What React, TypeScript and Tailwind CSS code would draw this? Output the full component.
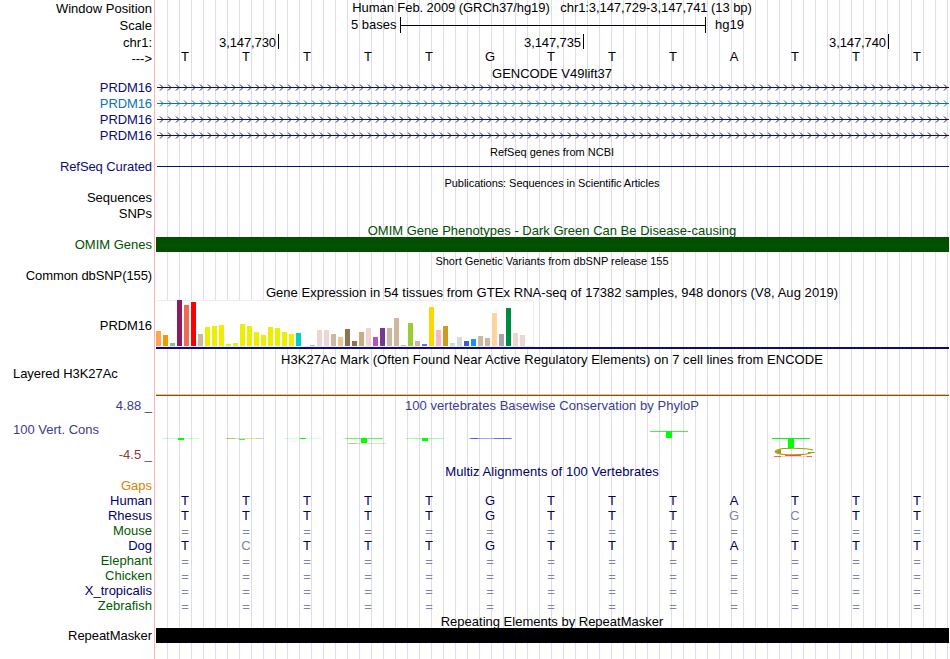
import { clsx } from 'clsx';

type Label = { text: string; className?: string };

const NAVY = 'text-[#0c0c78]';
const ALIGN = 'text-[#000064]';
const GREEN = 'text-[#005a00]';

// every label is a 16px line; the margins carry the empty track space above it
const labels: Label[] = [
  { text: 'Window Position' },
  { text: 'Scale', className: 'mt-px' },
  { text: 'chr1:', className: 'mt-px' },
  { text: '--->' },
  { text: 'PRDM16', className: clsx('mt-[13px] tracking-[-0.1px]', NAVY) },
  { text: 'PRDM16', className: 'tracking-[-0.1px] text-[#1070b0]' },
  { text: 'PRDM16', className: clsx('tracking-[-0.1px]', NAVY) },
  { text: 'PRDM16', className: clsx('tracking-[-0.1px]', NAVY) },
  { text: 'RefSeq Curated', className: clsx('mt-[15px] tracking-[-0.08px]', NAVY) },
  { text: 'Sequences', className: 'mt-[15px]' },
  { text: 'SNPs' },
  { text: 'OMIM Genes', className: 'mt-[15px] text-[#005000]' },
  { text: 'Common dbSNP(155)', className: 'mt-[15px] tracking-[-0.1px]' },
  { text: 'PRDM16', className: 'mt-[34px] tracking-[-0.1px]' },
  { text: 'Layered H3K27Ac', className: 'mt-8 self-start ml-[13px] tracking-[-0.05px]' },
  { text: '4.88 _', className: 'mt-4 text-[#3c3c8c]' },
  { text: '100 Vert. Cons', className: 'mt-2 self-start ml-[13px] text-[#3c3c8c]' },
  { text: '-4.5 _', className: 'mt-[9px] text-[#8c3c3c]' },
];

const species: { name: string; bases: string; className: string }[] = [
  { name: 'Human', bases: 'TTTTTGTTTATTT', className: ALIGN },
  { name: 'Rhesus', bases: 'TTTTTGTTTgcTT', className: ALIGN },
  { name: 'Mouse', bases: '=============', className: GREEN },
  { name: 'Dog', bases: 'TcTTTGTTTATTT', className: ALIGN },
  { name: 'Elephant', bases: '=============', className: GREEN },
  { name: 'Chicken', bases: '=============', className: GREEN },
  { name: 'X_tropicalis', bases: '=============', className: ALIGN },
  { name: 'Zebrafish', bases: '=============', className: GREEN },
];

// [height in px, tissue colour]
const tissues: [number, string][] = [
  [15, '#ffa54f'], [11, '#ee9a00'], [3, '#8fbc8f'], [46, '#8b1c62'], [41, '#ee6a50'], [44, '#ff0000'],
  [12, '#cdb79e'], [19, '#eeee00'], [20, '#eeee00'], [21, '#eeee00'], [2, '#eeee00'], [3, '#eeee00'],
  [22, '#eeee00'], [20, '#eeee00'], [14, '#eeee00'], [11, '#eeee00'], [19, '#eeee00'], [18, '#eeee00'],
  [14, '#eeee00'], [12, '#eeee00'], [13, '#00cdcd'], [0, '#ee82ee'], [1, '#9ac0cd'], [16, '#eed5d2'],
  [16, '#eed5d2'], [12, '#cdb79e'], [9, '#eec591'], [17, '#8b7355'], [5, '#8b7355'], [14, '#cdaa7d'],
  [18, '#eed5d2'], [9, '#b452cd'], [18, '#7a378b'], [18, '#cdb79e'], [28, '#cdb79e'], [1, '#cdb79e'],
  [23, '#9acd32'], [5, '#cdb79e'], [2, '#7a67ee'], [39, '#ffd700'], [16, '#ffb6c1'], [20, '#cd9b1d'],
  [3, '#b4eeb4'], [9, '#d9d9d9'], [5, '#3a5fcd'], [7, '#1e90ff'], [10, '#cdb79e'], [8, '#cdb79e'],
  [33, '#ffd39b'], [12, '#a6a6a6'], [38, '#008b45'], [13, '#eed5d2'], [11, '#eed5d2'], [0, '#ff00ff'],
];

function Title({ children, className }: { children: string; className?: string }) {
  return (
    <h2 className={clsx('-ml-px h-4 shrink-0 whitespace-pre text-center leading-4', className)}>{children}</h2>
  );
}

function Bases({ bases, className }: { bases: string; className?: string }) {
  return (
    <div className={clsx('-ml-[0.5px] flex', className)}>
      {bases.split('').map((b, i) => (
        <span
          key={i}
          className={clsx(
            'w-[61px] shrink-0 text-center',
            (b === '=' || b !== b.toUpperCase()) && 'text-[#8080b2]',
            b === '=' && 'pt-px',
          )}
        >
          {b.toUpperCase()}
        </span>
      ))}
    </div>
  );
}

function Transcript({ className }: { className: string }) {
  return (
    <svg width="792" height="16" className={clsx('ml-0.5 block shrink-0', className)} stroke="currentColor" fill="none">
      <path d="M0 7.5H792" />
      {Array.from({ length: 99 }, (_, i) => (
        <path key={i} d={`M${i * 8 + 3} 4.5l3 3l-3 3`} />
      ))}
    </svg>
  );
}

function PositionMark({ text, className }: { text: string; className: string }) {
  return (
    <div className={clsx('flex shrink-0 justify-end gap-0.5 leading-4 tracking-[-0.1px]', className)}>
      {text}
      <i className="-mt-px h-[15px] w-px bg-black" />
    </div>
  );
}

function Thin({ x, y, w, color, opacity }: { x: number; y: number; w: number; color: string; opacity: number }) {
  return <rect x={x} y={y} width={w} height="1" fill={color} opacity={opacity} />;
}

function Conservation() {
  return (
    <svg viewBox="155 414 795 50" width="795" height="50" className="block shrink-0">
      <Thin x={162} y={438} w={37} color="#00ff00" opacity={0.25} />
      <rect x="178" y="438" width="6" height="2" fill="#00ff00" />
      <Thin x={225} y={438} w={39} color="#a0a000" opacity={0.3} />
      <Thin x={227} y={438} w={8} color="#a0a000" opacity={0.5} />
      <Thin x={256} y={438} w={6} color="#a0a000" opacity={0.25} />
      <rect x="239" y="439" width="6" height="1" fill="#00ff00" opacity="0.8" />
      <Thin x={284} y={438} w={37} color="#00ff00" opacity={0.18} />
      <rect x="300" y="438" width="6" height="1" fill="#00ff00" />
      <Thin x={345} y={438} w={38} color="#00ff00" opacity={0.65} />
      <rect x="361" y="438" width="6" height="5" fill="#00ff00" />
      <Thin x={347} y={443} w={39} color="#a0a000" opacity={0.3} />
      <Thin x={349} y={443} w={8} color="#a0a000" opacity={0.4} />
      <Thin x={406} y={438} w={38} color="#00ff00" opacity={0.4} />
      <rect x="422" y="438" width="6" height="3" fill="#00ff00" />
      <Thin x={469} y={438} w={43} color="#0000ff" opacity={0.35} />
      <Thin x={471} y={438} w={7} color="#0000ff" opacity={0.5} />
      <Thin x={494} y={438} w={17} color="#0000ff" opacity={0.35} />
      <Thin x={650} y={431} w={38} color="#00ff00" opacity={0.8} />
      <rect x="666" y="431" width="6" height="7" fill="#00ff00" />
      <rect x="772" y="438" width="38" height="1" fill="#00ff00" />
      <rect x="788" y="438" width="6" height="10" fill="#00ff00" />
      <g stroke="#a0a000" fill="none">
        <path d="M813 450C806 447.800 775.500 447 775.500 451.500S806 455.500 812 452.500" strokeWidth="1.2" />
        <path d="M808 452.500H814.500" />
        <path d="M774 451.500l7-2.500v5z" fill="#a0a000" stroke="none" />
      </g>
      <path d="M774 456.500H781M807 456.500H812M785 455.500H801" stroke="#ff0000" opacity="0.6" />
      <path d="M780 456.300H808" stroke="#ff0000" opacity="0.25" />
    </svg>
  );
}

function LabelColumn() {
  return (
    <aside className="flex w-[154px] shrink-0 flex-col items-end pt-px pr-0.5 leading-4">
      {labels.map(({ text, className }, i) => (
        <div key={i} className={clsx('h-4 shrink-0 whitespace-pre', className)}>
          {text}
        </div>
      ))}
      <div className="mt-[15px] h-[15px] leading-[15px] text-[#e08000]">Gaps</div>
      {species.map((s) => (
        <div key={s.name} className={clsx('h-[15px] leading-[15px]', s.className)}>
          {s.name}
        </div>
      ))}
      <div className="mt-[15px] tracking-[-0.05px]">RepeatMasker</div>
    </aside>
  );
}

export default function App() {
  return (
    <main className="flex h-[659px] w-[950px] overflow-hidden bg-white font-['Liberation_Sans',Arial,sans-serif] text-[13px] text-black">
      <LabelColumn />
      <div className="w-px shrink-0 bg-[#ffb4b4]" />
      {/* guide lines every 12px, the first one hidden beside the pink divider */}
      <section className="flex w-[795px] shrink-0 flex-col [background:linear-gradient(#fff,#fff)_0_0/1px_100%_no-repeat,repeating-linear-gradient(to_right,#dcdcf5_0_1px,transparent_1px_12px)]">
        <Title className="tracking-[-0.07px]">
          {'Human Feb. 2009 (GRCh37/hg19)   chr1:3,147,729-3,147,741 (13 bp)'}
        </Title>
        <div className="mt-px flex h-4 shrink-0 leading-4">
          <span className="w-[241.5px] text-right">5 bases</span>
          <div className="ml-[3.5px] flex w-[306px] items-center border-x border-black">
            <i className="h-px w-full bg-black" />
          </div>
          <span className="ml-[9px]">hg19</span>
        </div>
        <div className="mt-0.5 flex h-4 shrink-0">
          <PositionMark text="3,147,730" className="w-[124px]" />
          <PositionMark text="3,147,735" className="w-[305px]" />
          <PositionMark text="3,147,740" className="w-[305px]" />
        </div>
        <Bases bases="TTTTTGTTTATTT" className="-mt-0.5 h-4 leading-4" />
        <Title className="mt-px">GENCODE V49lift37</Title>
        <Transcript className="-mt-0.5 text-[#0c0c78]" />
        <Transcript className="text-[#1070b0]" />
        <Transcript className="text-[#0c0c78]" />
        <Transcript className="text-[#0c0c78]" />
        <Title className="text-[11px]">RefSeq genes from NCBI</Title>
        <div className="ml-0.5 mr-px mt-1.5 h-px shrink-0 bg-[#0c0c78]" />
        <Title className="mt-2 text-[11px] tracking-[-0.06px]">Publications: Sequences in Scientific Articles</Title>
        <Title className="mt-8 text-[#005000]">OMIM Gene Phenotypes - Dark Green Can Be Disease-causing</Title>
        <div className="ml-px mr-px h-[15px] shrink-0 -mt-0.5 bg-[#005000]" />
        <Title className="mt-px text-[11px]">Short Genetic Variants from dbSNP release 155</Title>
        <Title className="mt-4 tracking-[0.055px]">
          Gene Expression in 54 tissues from GTEx RNA-seq of 17382 samples, 948 donors (V8, Aug 2019)
        </Title>
        <div className="-mt-px ml-px flex h-[47px] w-[378px] shrink-0 items-end gap-0.5 border-y border-r border-[#eee] bg-white">
          {tissues.map(([h, color], i) => (
            <i key={i} className="w-[5px] shrink-0" style={{ height: h, background: color }} />
          ))}
        </div>
        <div className="ml-px mr-px h-0.5 shrink-0 bg-[#0c0c78]" />
        <Title className="mt-[3px] tracking-[0.05px]">
          H3K27Ac Mark (Often Found Near Active Regulatory Elements) on 7 cell lines from ENCODE
        </Title>
        <div className="ml-px mr-px mt-[26px] h-0.5 shrink-0 border-b border-[#785028] bg-[#ffc060]" />
        <Title className="mt-0.5 tracking-[0.04px] text-[#3c3c8c]">
          100 vertebrates Basewise Conservation by PhyloP
        </Title>
        <Conservation />
        <Title className={clsx('tracking-[0.07px]', ALIGN)}>Multiz Alignments of 100 Vertebrates</Title>
        <div className="mt-[13px]">
          {species.map((s) => (
            <Bases key={s.name} bases={s.bases} className="h-[15px] leading-[15px] text-[#000064]" />
          ))}
        </div>
        <Title className="mt-px">Repeating Elements by RepeatMasker</Title>
        <div className="ml-px mr-px h-[15px] shrink-0 -mt-0.5 bg-black" />
      </section>
    </main>
  );
}
